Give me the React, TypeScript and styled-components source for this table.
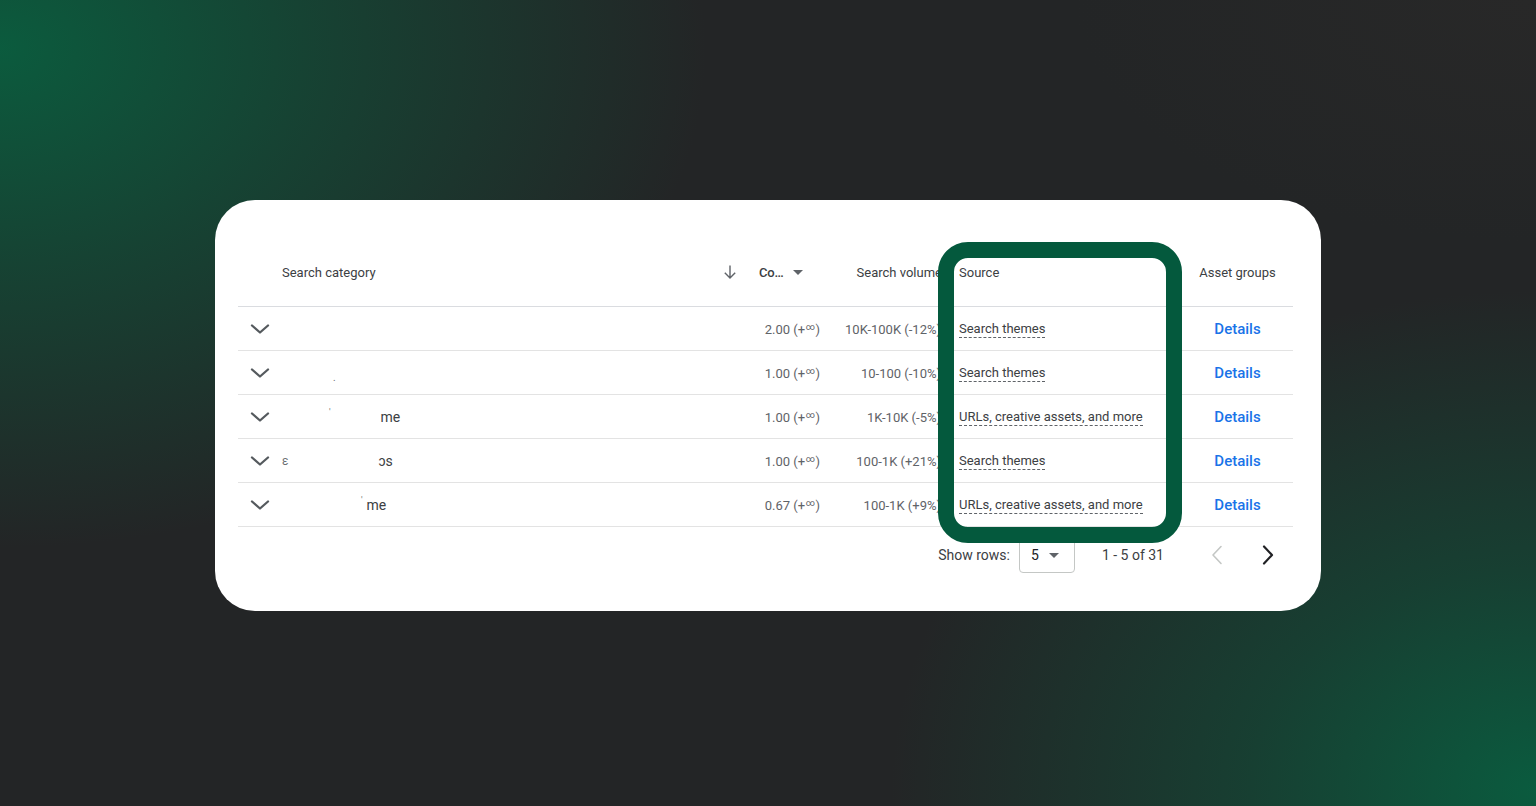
import React from "react";
import styled, { createGlobalStyle } from "styled-components";

const Global = createGlobalStyle`
  html, body { margin: 0; padding: 0; }
  body {
    font-family: Roboto, "Liberation Sans", Arial, sans-serif;
    background: #242627;
  }
  * { box-sizing: border-box; }
`;

const Page = styled.div`
  width: 1536px;
  height: 806px;
  display: flex;
  justify-content: center;
  align-items: center;
  padding-top: 5px;
  overflow: hidden;
  background:
    radial-gradient(ellipse 46% 62% at 0% 6%, rgba(10, 94, 63, 0.95) 0%, rgba(10, 94, 63, 0.5) 45%, rgba(10, 94, 63, 0) 100%),
    radial-gradient(ellipse 42% 62% at 100% 98%, rgba(9, 94, 64, 0.95) 0%, rgba(9, 94, 64, 0.45) 45%, rgba(9, 94, 64, 0) 100%),
    radial-gradient(ellipse 30% 30% at 100% 0%, rgba(40, 40, 40, 1) 0%, rgba(40, 40, 40, 0) 100%),
    #232526;
`;

const Card = styled.div`
  position: relative;
  width: 1106px;
  height: 411px;
  background: #ffffff;
  border-radius: 40px;
  padding: 40px 28px 38px 23px;
  display: flex;
  flex-direction: column;
`;

const COLS = "44px 433px 115px 126px 226px 111px";

const HeaderRow = styled.div`
  display: grid;
  grid-template-columns: ${COLS};
  height: 67px;
  align-items: center;
  border-bottom: 1px solid #dadce0;
  color: #3c4043;
  font-size: 13px;
  padding-bottom: 2px;
`;

const Row = styled.div`
  display: grid;
  grid-template-columns: ${COLS};
  height: 44px;
  align-items: center;
  border-bottom: 1px solid #e3e3e3;
  font-size: 13px;
  color: #5f6368;
  padding-top: 1px;
`;

type Align = "left" | "right" | "center";

const Cell = styled.div<{ $align?: Align; $pl?: number; $pr?: number }>`
  display: flex;
  align-items: center;
  white-space: nowrap;
  overflow: visible;
  justify-content: ${(p) =>
    p.$align === "right" ? "flex-end" : p.$align === "center" ? "center" : "flex-start"};
  padding-left: ${(p) => p.$pl ?? 0}px;
  padding-right: ${(p) => p.$pr ?? 0}px;
`;

const SortHead = styled.div`
  display: flex;
  align-items: center;
  padding-left: 6px;
  color: #3c4043;
`;

const SortArrow = styled.span`
  display: inline-flex;
  width: 18px;
  justify-content: center;
  margin-right: 20px;
  color: #5f6368;
`;

const HeadLabel = styled.span`
  font-weight: 500;
  color: #3c4043;
  letter-spacing: -0.2px;
`;

const Caret = styled.span`
  display: inline-block;
  margin-left: 10px;
  width: 0;
  height: 0;
  border-left: 5px solid transparent;
  border-right: 5px solid transparent;
  border-top: 5px solid #5f6368;
`;

const CategoryText = styled.span`
  color: #3c4043;
  font-size: 14px;
  display: inline-flex;
  align-items: center;
`;

const Gap = styled.span<{ $w: number }>`
  display: inline-block;
  width: ${(p) => p.$w}px;
`;

const Fragment = styled.span<{ $size?: number; $dy?: number }>`
  font-size: ${(p) => p.$size ?? 14}px;
  position: relative;
  top: ${(p) => p.$dy ?? 0}px;
  color: #6b6f73;
`;

const Inf = styled.span`
  font-size: 9px;
  position: relative;
  top: -2px;
  margin: 0 0.5px;
`;

const SourceLink = styled.span`
  color: #3c4043;
  font-size: 13px;
  border-bottom: 1px dashed #5f6368;
  line-height: 16px;
`;

const Details = styled.span`
  color: #1a73e8;
  font-size: 15px;
  font-weight: 500;
`;

const Footer = styled.div`
  display: flex;
  align-items: center;
  justify-content: flex-end;
  padding-top: 10px;
  padding-right: 13px;
  height: 46px;
  color: #3c4043;
  font-size: 14px;
`;

const RowsLabel = styled.span`
  margin-right: 9px;
`;

const Select = styled.div`
  width: 56px;
  height: 36px;
  border: 1px solid #c4c7c5;
  border-radius: 4px;
  display: flex;
  align-items: center;
  padding-left: 11px;
  font-size: 14px;
  color: #202124;
  margin-right: 27px;
`;

const Range = styled.span`
  margin-right: 41px;
`;

const PageBtn = styled.span`
  display: inline-flex;
  width: 24px;
  height: 24px;
  align-items: center;
  justify-content: center;
  & + & {
    margin-left: 27px;
  }
`;

const Highlight = styled.div`
  position: absolute;
  left: 723px;
  top: 42px;
  width: 244px;
  height: 301px;
  border: 16px solid #04593d;
  border-radius: 30px;
  pointer-events: none;
`;

const Chevron = () => (
  <svg width="20" height="10" viewBox="0 0 20 10">
    <polyline points="2,1.5 10,8.5 18,1.5" fill="none" stroke="#555a5e" strokeWidth="2.3" strokeLinecap="round" strokeLinejoin="round" />
  </svg>
);

const DownArrow = () => (
  <svg width="14" height="16" viewBox="0 0 14 16">
    <path d="M7 1.5 V14 M1.8 8.8 L7 14 L12.2 8.8" fill="none" stroke="#5f6368" strokeWidth="1.4" />
  </svg>
);

const PageChevron = ({ dir, color, w }: { dir: "left" | "right"; color: string; w: number }) => (
  <svg width="12" height="20" viewBox="0 0 12 20">
    <polyline
      points={dir === "right" ? "2,1.5 10,10 2,18.5" : "10,1.5 2,10 10,18.5"}
      fill="none"
      stroke={color}
      strokeWidth={w}
      strokeLinecap="round"
      strokeLinejoin="round"
    />
  </svg>
);

type RowData = {
  cat: React.ReactNode;
  co: string;
  vol: string;
  source: string;
};

const rows: RowData[] = [
  { cat: null, co: "2.00", vol: "10K-100K (-12%)", source: "Search themes" },
  {
    cat: (
      <CategoryText>
        <Gap $w={51} />
        <Fragment $size={10} $dy={4}>.</Fragment>
      </CategoryText>
    ),
    co: "1.00",
    vol: "10-100 (-10%)",
    source: "Search themes",
  },
  {
    cat: (
      <CategoryText>
        <Gap $w={47} />
        <Fragment $size={9} $dy={-5}>'</Fragment>
        <Gap $w={50} />
        me
      </CategoryText>
    ),
    co: "1.00",
    vol: "1K-10K (-5%)",
    source: "URLs, creative assets, and more",
  },
  {
    cat: (
      <CategoryText>
        <Fragment $size={12}>ε</Fragment>
        <Gap $w={90} />
        ɔs
      </CategoryText>
    ),
    co: "1.00",
    vol: "100-1K (+21%)",
    source: "Search themes",
  },
  {
    cat: (
      <CategoryText>
        <Gap $w={79} />
        <Fragment $size={9} $dy={-5}>'</Fragment>
        <Gap $w={4} />
        me
      </CategoryText>
    ),
    co: "0.67",
    vol: "100-1K (+9%)",
    source: "URLs, creative assets, and more",
  },
];

export default function App() {
  return (
    <>
      <Global />
      <Page>
        <Card>
          <HeaderRow>
            <Cell />
            <Cell>Search category</Cell>
            <SortHead>
              <SortArrow>
                <DownArrow />
              </SortArrow>
              <HeadLabel>Co…</HeadLabel>
              <Caret />
            </SortHead>
            <Cell $align="right" $pr={14}>Search volume</Cell>
            <Cell $pl={3}>Source</Cell>
            <Cell $align="center">Asset groups</Cell>
          </HeaderRow>
          {rows.map((r, i) => (
            <Row key={i}>
              <Cell $align="center">
                <Chevron />
              </Cell>
              <Cell>{r.cat}</Cell>
              <Cell $align="right" $pr={10}>
                {r.co}&nbsp;(+<Inf>∞</Inf>)
              </Cell>
              <Cell $align="right" $pr={15}>{r.vol}</Cell>
              <Cell $pl={3}>
                <SourceLink>{r.source}</SourceLink>
              </Cell>
              <Cell $align="center">
                <Details>Details</Details>
              </Cell>
            </Row>
          ))}
          <Footer>
            <RowsLabel>Show rows:</RowsLabel>
            <Select>
              5
              <Caret />
            </Select>
            <Range>1 - 5 of 31</Range>
            <PageBtn>
              <PageChevron dir="left" color="#c4c7c5" w={1.6} />
            </PageBtn>
            <PageBtn>
              <PageChevron dir="right" color="#202124" w={2.2} />
            </PageBtn>
          </Footer>
          <Highlight />
        </Card>
      </Page>
    </>
  );
}
